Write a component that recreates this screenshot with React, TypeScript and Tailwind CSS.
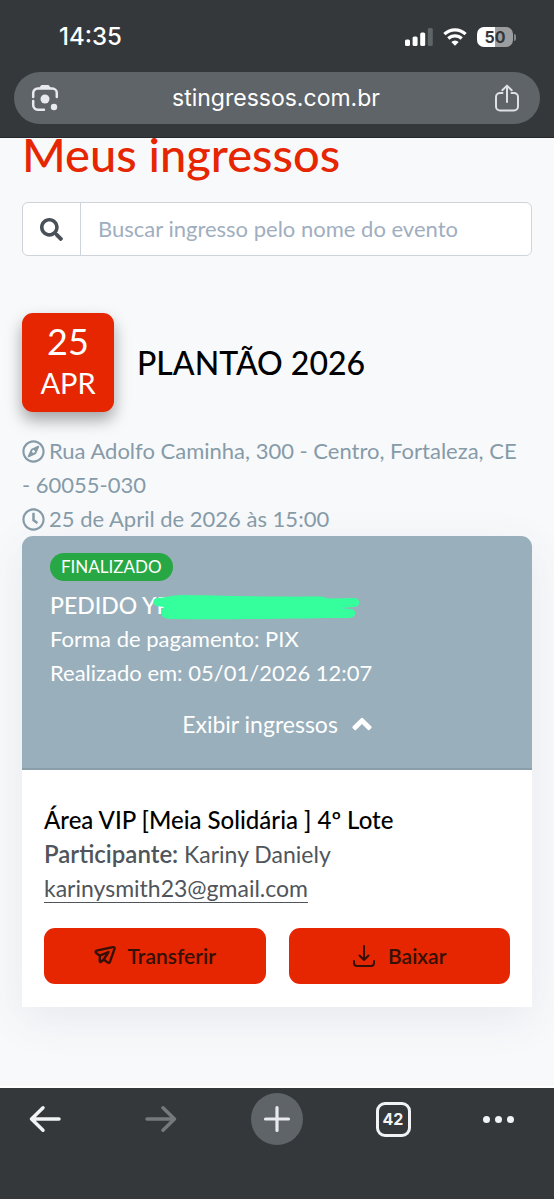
import { FaSearch, FaRegCompass, FaRegClock } from "react-icons/fa";

function StatusBar() {
  return (
    <div className="flex items-center justify-between pt-[23px] pr-[38px] pl-[59px]">
      <time className="text-[24px] leading-7 font-medium">14:35</time>
      <div className="flex items-center gap-[10px]">
        <svg width="28" height="18" viewBox="0 0 28 18" fill="#fff" aria-label="Sinal">
          <rect x="0" y="11.5" width="5" height="6.5" rx="1.6" />
          <rect x="7.6" y="8.5" width="5" height="9.5" rx="1.6" />
          <rect x="15.2" y="4.5" width="5" height="13.5" rx="1.6" />
          <rect x="22.8" y="0" width="5" height="18" rx="1.6" fill="#5f6467" />
        </svg>
        <svg width="24" height="18" viewBox="0 0 24 18" fill="none" stroke="#fff" strokeWidth="3.2" aria-label="Wi-Fi">
          <path d="M1.4 6.2a15.3 15.3 0 0 1 21.2 0" />
          <path d="M5.3 10.5a9.7 9.7 0 0 1 13.4 0" />
          <path d="M8.3 14.1a5.3 5.3 0 0 1 7.4 0L12 17.8z" fill="#fff" stroke="none" />
        </svg>
        <div className="flex items-center gap-px" aria-label="Bateria 50%">
          <div className="flex h-5 w-9 items-center justify-center rounded-[7px] bg-linear-to-r from-white from-50% to-[#9b9d9f] to-50% text-[16px] leading-5 font-bold text-[#34373a]">
            50
          </div>
          <div className="h-[7px] w-[2px] rounded-r-full bg-[#85888a]" />
        </div>
      </div>
    </div>
  );
}

function BrowserHeader() {
  return (
    <header className="h-[138px] shrink-0 border-b border-[#26292b] bg-[#34383b] font-[Inter,sans-serif] text-white">
      <StatusBar />
      <div className="mx-[14px] mt-[21px] flex h-[52px] items-center justify-between rounded-full bg-[#5f6468] pr-[19px] pl-[17px]">
        <button aria-label="Pesquisar com a câmera">
          <svg width="28" height="28" viewBox="0 0 28 28" fill="none" stroke="#e8eaed" strokeWidth="2.5" strokeLinecap="round">
            <path d="M2.2 13V9a4.5 4.5 0 0 1 4.5-4.5h14.6a4.5 4.5 0 0 1 4.5 4.5V13M2.2 17v4.3a4.5 4.5 0 0 0 4.5 4.5H13" />
            <path d="M8 4.5l1.5-2.500c.4-.6.9-.9 1.600-.9h5.800c.7 0 1.200.3 1.600.9L20 4.500z" fill="#e8eaed" stroke="none" />
            <circle cx="14" cy="15" r="4.5" fill="#e8eaed" stroke="none" />
            <circle cx="23" cy="23" r="3.2" fill="#e8eaed" stroke="none" />
          </svg>
        </button>
        <a href="#inicio" className="text-[23px] leading-7">stingressos.com.br</a>
        <button aria-label="Compartilhar">
          <svg width="28" height="28" viewBox="0 0 28 28" fill="none" stroke="#dfe1e4" strokeWidth="2" strokeLinecap="round" strokeLinejoin="round">
            <path d="M9.5 9H7a4 4 0 0 0-4 4v9.5a4 4 0 0 0 4 4h14a4 4 0 0 0 4-4V13a4 4 0 0 0-4-4h-2.5" />
            <path d="M14 18V2M9.3 6.2L14 1.6l4.7 4.6" />
          </svg>
        </button>
      </div>
    </header>
  );
}

function SearchBox() {
  return (
    <form className="mt-8 flex h-[54px] overflow-hidden rounded-md border border-[#ced4da] bg-white">
      <button type="button" aria-label="Buscar" className="flex w-[58px] shrink-0 items-center justify-center border-r border-[#ced4da] text-[#495057]">
        <FaSearch size={23} />
      </button>
      <input
        type="search"
        aria-label="Buscar ingresso pelo nome do evento"
        placeholder="Buscar ingresso pelo nome do evento"
        className="min-w-0 flex-1 px-[17px] text-[22px] leading-[34px] outline-none placeholder:text-[#a0aec0]"
      />
    </form>
  );
}

function EventInfo() {
  return (
    <section>
      <div className="mt-[57px] flex items-center gap-[23px]">
        <div className="flex h-[99px] w-[92px] flex-col items-center rounded-[11px] bg-[#e52600] pt-[7px] text-white shadow-[0_8px_16px_rgba(0,0,0,0.35)]">
          <span className="text-[36px] leading-[42px]">25</span>
          <span className="text-[29px] leading-[42px]">APR</span>
        </div>
        <h2 className="text-[32px] leading-10 font-medium text-black">PLANTÃO 2026</h2>
      </div>
      <div className="mt-[22px] text-[22px] leading-[34px] text-[#869ba8]">
        <p>
          <FaRegCompass size={23} className="mr-1 inline-block align-[-4px]" />
          Rua Adolfo Caminha, 300 - Centro, Fortaleza, CE <span className="whitespace-nowrap">- 60055-030</span>
        </p>
        <p>
          <FaRegClock size={23} className="mr-1 inline-block align-[-4px]" />
          25 de April de 2026 às 15:00
        </p>
      </div>
    </section>
  );
}

function OrderSummary() {
  return (
    <div className="rounded-t-[11px] border-b-2 border-[#8b9faa] bg-[#99afbb] px-7 pt-[17px] pb-[27px] text-[22px] leading-[34px] text-white">
      <div className="mb-[7px] flex">
        <span className="rounded-full bg-[#28a745] px-[11px] text-[17px] leading-7">FINALIZADO</span>
      </div>
      <div className="relative">
        <p className="text-[23px] font-medium">PEDIDO YP</p>
        <svg className="absolute top-[6px] left-[103px]" width="208" height="27" viewBox="0 0 208 27" fill="#34ff9c" aria-hidden="true">
          <path d="M4 4C12 4 18 1 30 1C90 2 120 3 168 2.500L176 4.500L201 4C208 4 208 13 201 13L188 14L198 15C204 15 204 24 196 24C150 24 90 26 18 25C8 25 6 19 11 13L4 12C-1 11-1 5 4 4Z" />
        </svg>
      </div>
      <p>Forma de pagamento: PIX</p>
      <p>Realizado em: 05/01/2026 12:07</p>
      <button className="mx-auto mt-[17px] flex items-center gap-[14px] text-[23px]">
        Exibir ingressos
        <svg width="20" height="14" viewBox="0 0 20 14" fill="currentColor" aria-hidden="true">
          <path d="M9 1.200a1.400 1.400 0 0 1 2 0L19.200 9.300a1.400 1.400 0 0 1 0 1.900l-1.500 1.500a1.400 1.400 0 0 1-2 0L10 7.100l-5.700 5.600a1.400 1.400 0 0 1-2 0L.8 11.200a1.400 1.400 0 0 1 0-1.900z" />
        </svg>
      </button>
    </div>
  );
}

function Ticket() {
  return (
    <div className="bg-white px-[22px] pt-[33px] pb-[23px] text-[23px] leading-[34px] text-[#50555b]">
      <h3 className="text-[24px] font-medium text-black">Área VIP [Meia Solidária ] 4º Lote</h3>
      <p>
        <span className="text-[24px] font-semibold">Participante:</span> Kariny Daniely
      </p>
      <div className="flex h-[34px] items-center">
        <a href="mailto:karinysmith23@gmail.com" className="border-b border-[#50555b] leading-7">
          karinysmith23@gmail.com
        </a>
      </div>
      <div className="mt-[23px] grid grid-cols-2 gap-[23px] text-[21px] leading-7 font-semibold text-[#351006]">
        <button className="flex h-[56px] items-center justify-center gap-3 rounded-[11px] bg-[#e52600]">
          <svg width="22" height="22" viewBox="0 0 22 22" fill="none" stroke="currentColor" strokeWidth="2.4" strokeLinecap="round" strokeLinejoin="round" aria-hidden="true">
            <path d="M18.700 2.200L2.600 5.700c-1.200.4-1.400 1.600-.4 2.300l3.700 2.700-.2 5.300c0 1 .8 1.400 1.500.7l2.500-2.200 4.200 3.100c.8.500 1.700.2 2-.7L20.500 3.900c.3-1.200-.6-2.100-1.800-1.700zM5.900 10.700L14.500 7l-4.800 7.500" />
          </svg>
          Transferir
        </button>
        <button className="flex h-[56px] items-center justify-center gap-3 rounded-[11px] bg-[#e52600]">
          <svg width="24" height="24" viewBox="0 0 24 24" fill="none" stroke="currentColor" strokeWidth="2" strokeLinecap="round" strokeLinejoin="round" aria-hidden="true">
            <path d="M12 2v14M7.500 11.500L12 16l4.500-4.500M2 17v2a3 3 0 0 0 3 3h14a3 3 0 0 0 3-3v-2" />
          </svg>
          Baixar
        </button>
      </div>
    </div>
  );
}

function BrowserToolbar() {
  return (
    <footer className="h-[111px] shrink-0 bg-[#34383b] font-[Inter,sans-serif]">
      <nav className="flex items-center gap-16 px-[19px] pt-[5px] text-[#f1f3f4]">
        <button aria-label="Voltar" className="flex h-[52px] w-[52px] items-center justify-center">
          <svg width="34" height="28" viewBox="0 0 34 28" fill="none" stroke="currentColor" strokeWidth="3.5" strokeLinecap="round" strokeLinejoin="round">
            <path d="M31 14H3.5M15 2.800L3.500 14 15 25.200" />
          </svg>
        </button>
        <button aria-label="Avançar" disabled className="flex h-[52px] w-[52px] items-center justify-center text-[#75797c]">
          <svg width="34" height="28" viewBox="0 0 34 28" fill="none" stroke="currentColor" strokeWidth="3.5" strokeLinecap="round" strokeLinejoin="round">
            <path d="M3 14h27.500M19 2.800L30.500 14 19 25.200" />
          </svg>
        </button>
        <button aria-label="Nova guia" className="flex h-[52px] w-[52px] items-center justify-center rounded-full bg-[#5f6468]">
          <svg width="28" height="28" viewBox="0 0 28 28" fill="none" stroke="#e8eaed" strokeWidth="3.2" strokeLinecap="round">
            <path d="M14 2.500v23M2.500 14h23" />
          </svg>
        </button>
        <button aria-label="42 guias abertas" className="flex h-[52px] w-[52px] items-center justify-center">
          <span className="flex h-[35px] w-[35px] shrink-0 items-center justify-center rounded-[9px] border-3 border-current text-[16px] leading-5 font-bold">42</span>
        </button>
        <button aria-label="Mais opções" className="flex h-[52px] items-center gap-[5px]">
          <span className="size-[7px] rounded-full bg-current" />
          <span className="size-[7px] rounded-full bg-current" />
          <span className="size-[7px] rounded-full bg-current" />
        </button>
      </nav>
    </footer>
  );
}

export default function App() {
  return (
    <div className="flex min-h-screen flex-col bg-[#f8f9fb] font-[Lato,sans-serif]">
      <BrowserHeader />
      <main className="flex-1 border-b-2 border-white px-[22px]">
        <h1 className="text-[47px] leading-8 font-medium text-[#e52600]">Meus ingressos</h1>
        <SearchBox />
        <EventInfo />
        <article className="rounded-t-[11px] shadow-[0_12px_44px_rgba(60,80,100,0.09)]">
          <OrderSummary />
          <Ticket />
        </article>
      </main>
      <BrowserToolbar />
    </div>
  );
}
